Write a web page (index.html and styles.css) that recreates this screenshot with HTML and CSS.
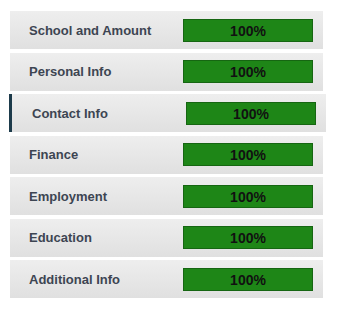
FILE: index.html
```html
<!DOCTYPE html>
<html lang="en">
<head>
    <meta charset="UTF-8">
    <title>Progress</title>
    <link rel="stylesheet" href="styles.css">
</head>
<body>
    <ul class="steps">
        <li class="step"><span class="step-name">School and Amount</span><div class="bar">100%</div></li>
        <li class="step"><span class="step-name">Personal Info</span><div class="bar">100%</div></li>
        <li class="step active"><span class="step-name">Contact Info</span><div class="bar">100%</div></li>
        <li class="step"><span class="step-name">Finance</span><div class="bar">100%</div></li>
        <li class="step"><span class="step-name">Employment</span><div class="bar">100%</div></li>
        <li class="step"><span class="step-name">Education</span><div class="bar">100%</div></li>
        <li class="step"><span class="step-name">Additional Info</span><div class="bar">100%</div></li>
    </ul>
</body>
</html>
```

FILE: styles.css
```css
body {
    margin: 0;
    background-color: #ffffff;
    font-family: "Liberation Sans", Arial, sans-serif;
}

.steps {
    list-style-type: none;
    margin: 0;
    padding: 11px 14px 0 10px;
    display: flex;
    flex-direction: column;
    gap: 3.5px;
}

.step {
    height: 38px;
    display: flex;
    align-items: center;
    justify-content: space-between;
    padding: 0 10px 0 19px;
    background: linear-gradient(to bottom, #eeeeee, #e0e0e0);
}

.step-name {
    font-size: 13px;
    font-weight: bold;
    color: #3d4552;
}

.bar {
    width: 128px;
    height: 21px;
    line-height: 22px;
    text-align: center;
    font-size: 14px;
    font-weight: bold;
    color: #111111;
    background-color: #1e8617;
    border: 1px solid #166612;
}

/* etapa atual */
.step.active {
    margin: 0 -3px 0 -1px;
    border-left: 3px solid #1d3b4b;
    padding-left: 20px;
}
```
